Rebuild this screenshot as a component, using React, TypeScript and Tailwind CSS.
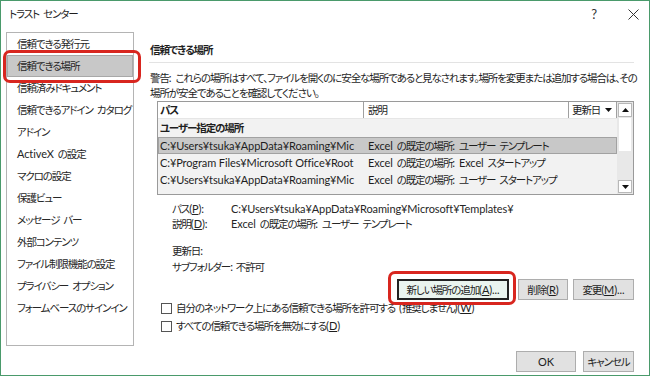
import React from "react";

const sideItems = [
  "信頼できる発行元",
  "信頼できる場所",
  "信頼済みドキュメント",
  "信頼できるアドイン カタログ",
  "アドイン",
  "ActiveX の設定",
  "マクロの設定",
  "保護ビュー",
  "メッセージ バー",
  "外部コンテンツ",
  "ファイル制限機能の設定",
  "プライバシー オプション",
  "フォームベースのサインイン",
];

const rows = [
  ["C:¥Users¥tsuka¥AppData¥Roaming¥Mic", "Excel の既定の場所: ユーザー テンプレート"],
  ["C:¥Program Files¥Microsoft Office¥Root", "Excel の既定の場所: Excel スタートアップ"],
  ["C:¥Users¥tsuka¥AppData¥Roaming¥Mic", "Excel の既定の場所: ユーザー スタートアップ"],
];

// latin runs keep normal spacing, the japanese text is tightened
const lat = "text-[11px] tracking-[-0.1px]";

function T({ s }: { s: string }) {
  const parts = s.split(/( |[\x21-\x7E¥]+)/).filter((p) => p !== "");
  return (
    <>
      {parts.map((p, i) =>
        p === " " ? (
          <span key={i} className="inline-block w-[4px]" />
        ) : /^[\x21-\x7E¥]+$/.test(p) ? (
          <span key={i} className={lat}>
            {p}
          </span>
        ) : (
          p
        )
      )}
    </>
  );
}

function K({ c }: { c: string }) {
  return <u className={lat}>{c}</u>;
}

function Tri({ down = true }: { down?: boolean }) {
  return (
    <svg width="7" height="4" viewBox="0 0 7 4">
      {down ? <polygon points="0,0 7,0 3.5,4" fill="#111" /> : <polygon points="0,4 7,4 3.5,0" fill="#111" />}
    </svg>
  );
}

function Btn({ children, w, focus = false }: { children: React.ReactNode; w: string; focus?: boolean }) {
  return (
    <div
      className={
        "h-[21px] flex items-center justify-center whitespace-nowrap " +
        w +
        (focus ? " bg-[#eaf4ef] border-2 border-[#222]" : " bg-[#e1e1e1] border border-[#adadad]")
      }
    >
      {children}
    </div>
  );
}

function Check({ children }: { children: React.ReactNode }) {
  return (
    <div className="h-[16px] flex items-center ml-[11px]">
      <div className="w-[11px] h-[11px] border border-[#555] bg-white" />
      <span className="ml-[4px] whitespace-nowrap">{children}</span>
    </div>
  );
}

export default function App() {
  return (
    <div className="relative w-[650px] h-[376px] overflow-hidden bg-white border border-[#4a9a6b] text-[10.5px] tracking-[-1.1px] leading-[16px] text-[#1e1e1e] font-['Lato','Noto_Sans_CJK_JP',sans-serif] [font-feature-settings:'palt']">
      {/* title bar */}
      <div className="h-[31px] flex items-start pt-[5px] pl-[8px]">
        <span>
          <T s="トラスト センター" />
        </span>
        <span className="ml-auto mr-[31px] text-[13px] tracking-normal text-[#333]">?</span>
        <svg className="mr-[10px] mt-[3px]" width="11" height="11" viewBox="0 0 11 11">
          <path d="M0.5 0.5 L10.5 10.5 M10.5 0.5 L0.5 10.5" stroke="#333" strokeWidth="1" />
        </svg>
      </div>

      <div className="flex">
        {/* sidebar */}
        <div className="ml-[5px] w-[128px] h-[314px] border border-[#b4b4b4]">
          {sideItems.map((s, i) => (
            <div
              key={s}
              className={
                "h-[22px] flex items-center whitespace-nowrap text-[#262626] " +
                (i === 1 ? "bg-[#c8c8c8] border border-[#a8a8a8] pl-[9px]" : "pl-[10px]")
              }
            >
              <T s={s} />
            </div>
          ))}
        </div>

        {/* main */}
        <div className="ml-[16px] w-[484px] flex flex-col">
          <div className="mt-[10px] h-[16px] font-bold">信頼できる場所</div>
          <div className="mt-[4px] border-t border-[#e3e3e3] -ml-[1px]" />
          <div className="mt-[7px] leading-[15px] whitespace-nowrap">
            <div>
              <T s="警告: これらの場所はすべて、ファイルを開くのに安全な場所であると見なされます。場所を変更または追加する場合は、その" />
            </div>
            <div>場所が安全であることを確認してください。</div>
          </div>

          {/* list */}
          <div className="ml-[7px] w-[477px] h-[94px] border border-[#9a9a9a] flex overflow-hidden">
            <div className="w-[459px] flex flex-col">
              <div className="h-[17px] flex bg-white border-b border-[#e6e6e6]">
                <div className="w-[206px] border-r border-[#a0a0a0] pl-[2px] font-bold flex items-center">パス</div>
                <div className="w-[205px] border-r border-[#a0a0a0] pl-[4px] flex items-center">説明</div>
                <div className="w-[48px] border-r border-[#a0a0a0] pl-[3px] flex items-center gap-[5px] whitespace-nowrap">
                  更新日
                  <Tri />
                </div>
              </div>
              <div className="flex-1 bg-[#f2f2f2]">
                <div className="h-[18px] flex items-center pl-[2px] font-bold">ユーザー指定の場所</div>
                {rows.map((r, i) => (
                  <div
                    key={i}
                    className={
                      "h-[17px] flex items-center whitespace-nowrap " +
                      (i === 0 ? "bg-[#c8c8c8] border border-[#a2a2a2]" : "border border-transparent")
                    }
                  >
                    <div className={"w-[205px] pl-[1px] overflow-hidden " + lat}>{r[0]}</div>
                    <div className="pl-[4px]">
                      <T s={r[1]} />
                    </div>
                  </div>
                ))}
              </div>
            </div>
            {/* scrollbar */}
            <div className="w-[16px] bg-[#e8e8e8] flex flex-col items-center py-[1px]">
              <div className="w-[14px] h-[14px] bg-white border border-[#b8b8b8] flex items-center justify-center">
                <Tri down={false} />
              </div>
              <div className="w-[12px] h-[33px] bg-white mt-[1px]" />
              <div className="flex-1" />
              <div className="w-[14px] h-[13px] bg-white border border-[#b8b8b8] flex items-center justify-center">
                <Tri />
              </div>
            </div>
          </div>

          {/* details */}
          <div className="mt-[6px] ml-[22px] text-[#262626]">
            <div className="h-[15px] flex items-center">
              <span className="w-[59px] shrink-0">
                パス<T s="(" />
                <K c="P" />
                <T s="):" />
              </span>
              <span className={lat}>C:¥Users¥tsuka¥AppData¥Roaming¥Microsoft¥Templates¥</span>
            </div>
            <div className="h-[15px] flex items-center">
              <span className="w-[59px] shrink-0">
                説明<T s="(" />
                <K c="D" />
                <T s="):" />
              </span>
              <span>
                <T s="Excel の既定の場所: ユーザー テンプレート" />
              </span>
            </div>
            <div className="h-[16px] mt-[12px] flex items-center">
              更新日<T s=":" />
            </div>
            <div className="h-[16px] flex items-center">
              <span className="min-w-[59px] pr-[3px] shrink-0 whitespace-nowrap">
                サブフォルダー<T s=":" />
              </span>
              <span>不許可</span>
            </div>
          </div>

          <div className="mt-[4px] flex justify-end gap-[9px]">
            <Btn w="w-[112px]" focus>
              新しい場所の追加<T s="(" />
              <K c="A" />
              <T s=")..." />
            </Btn>
            <div className="flex gap-[5px]">
              <Btn w="w-[50px]">
                削除<T s="(" />
                <K c="R" />
                <T s=")" />
              </Btn>
              <Btn w="w-[61px]">
                変更<T s="(" />
                <K c="M" />
                <T s=")..." />
              </Btn>
            </div>
          </div>

          <Check>
            自分のネットワーク上にある信頼できる場所を許可する<T s=" (" />
            推奨しません<T s=")(" />
            <K c="W" />
            <T s=")" />
          </Check>
          <div className="mt-[2px]">
            <Check>
              すべての信頼できる場所を無効にする<T s="(" />
              <K c="D" />
              <T s=")" />
            </Check>
          </div>

          <div className="mt-[17px] flex justify-end gap-[7px]">
            <Btn w="w-[60px]">
              <T s="OK" />
            </Btn>
            <Btn w="w-[51px]">キャンセル</Btn>
          </div>
        </div>
      </div>

      {/* red highlights */}
      <div className="absolute left-[2px] top-[49px] w-[138px] h-[33px] border-[3px] border-[#d8261f] rounded-[7px]" />
      <div className="absolute left-[387px] top-[270px] w-[128px] h-[34px] border-[3px] border-[#d8261f] rounded-[7px]" />
    </div>
  );
}
